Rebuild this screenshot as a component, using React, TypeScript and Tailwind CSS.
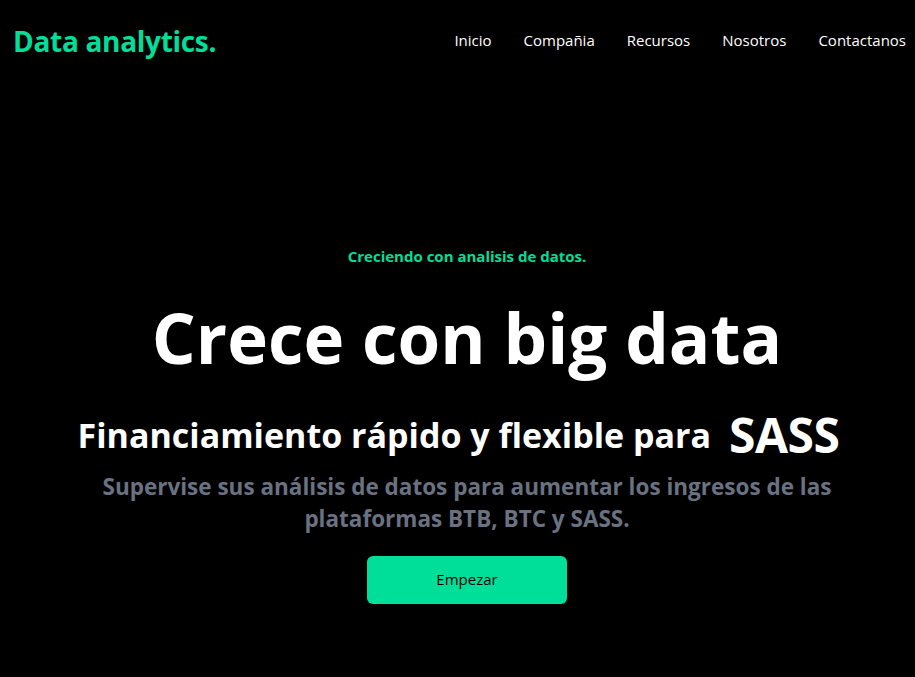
import React from "react";

export default function App() {
  const font = { fontFamily: '"Open Sans", "Noto Sans", sans-serif' };
  return (
    <div className="w-[915px] h-[677px] bg-black text-white overflow-hidden" style={font}>
      <nav className="flex items-center justify-between h-[81px] pl-[13px] pr-[9px]">
        <h1 className="text-[28px] font-bold text-[#00df9a] tracking-[-0.3px]">Data analytics.</h1>
        <ul className="flex gap-8 text-[15px]">
          <li>Inicio</li>
          <li>Compañia</li>
          <li>Recursos</li>
          <li>Nosotros</li>
          <li>Contactanos</li>
        </ul>
      </nav>
      <div className="flex flex-col items-center text-center pl-[19px]">
        <p className="mt-[164px] text-[#00df9a] font-bold text-[15px]">Creciendo con analisis de datos.</p>
        <h1 className="mt-[35px] text-[69px] leading-none font-bold">Crece con big data</h1>
        <div className="mt-[39px] flex items-center justify-center pr-[17px]">
          <p className="text-[34px] leading-none font-bold">Financiamiento rápido y flexible para</p>
          <span className="pl-[18px] text-[48px] leading-none font-bold tracking-[-0.5px]">SASS</span>
        </div>
        <p className="mt-[12px] w-[780px] text-[22.5px] leading-[32px] font-bold text-gray-500">
          Supervise sus análisis de datos para aumentar los ingresos de las plataformas BTB, BTC y SASS.
        </p>
        <button className="mt-[21px] w-[200px] h-[48px] rounded-md bg-[#00df9a] text-black font-medium text-[15px]">
          Empezar
        </button>
      </div>
    </div>
  );
}
